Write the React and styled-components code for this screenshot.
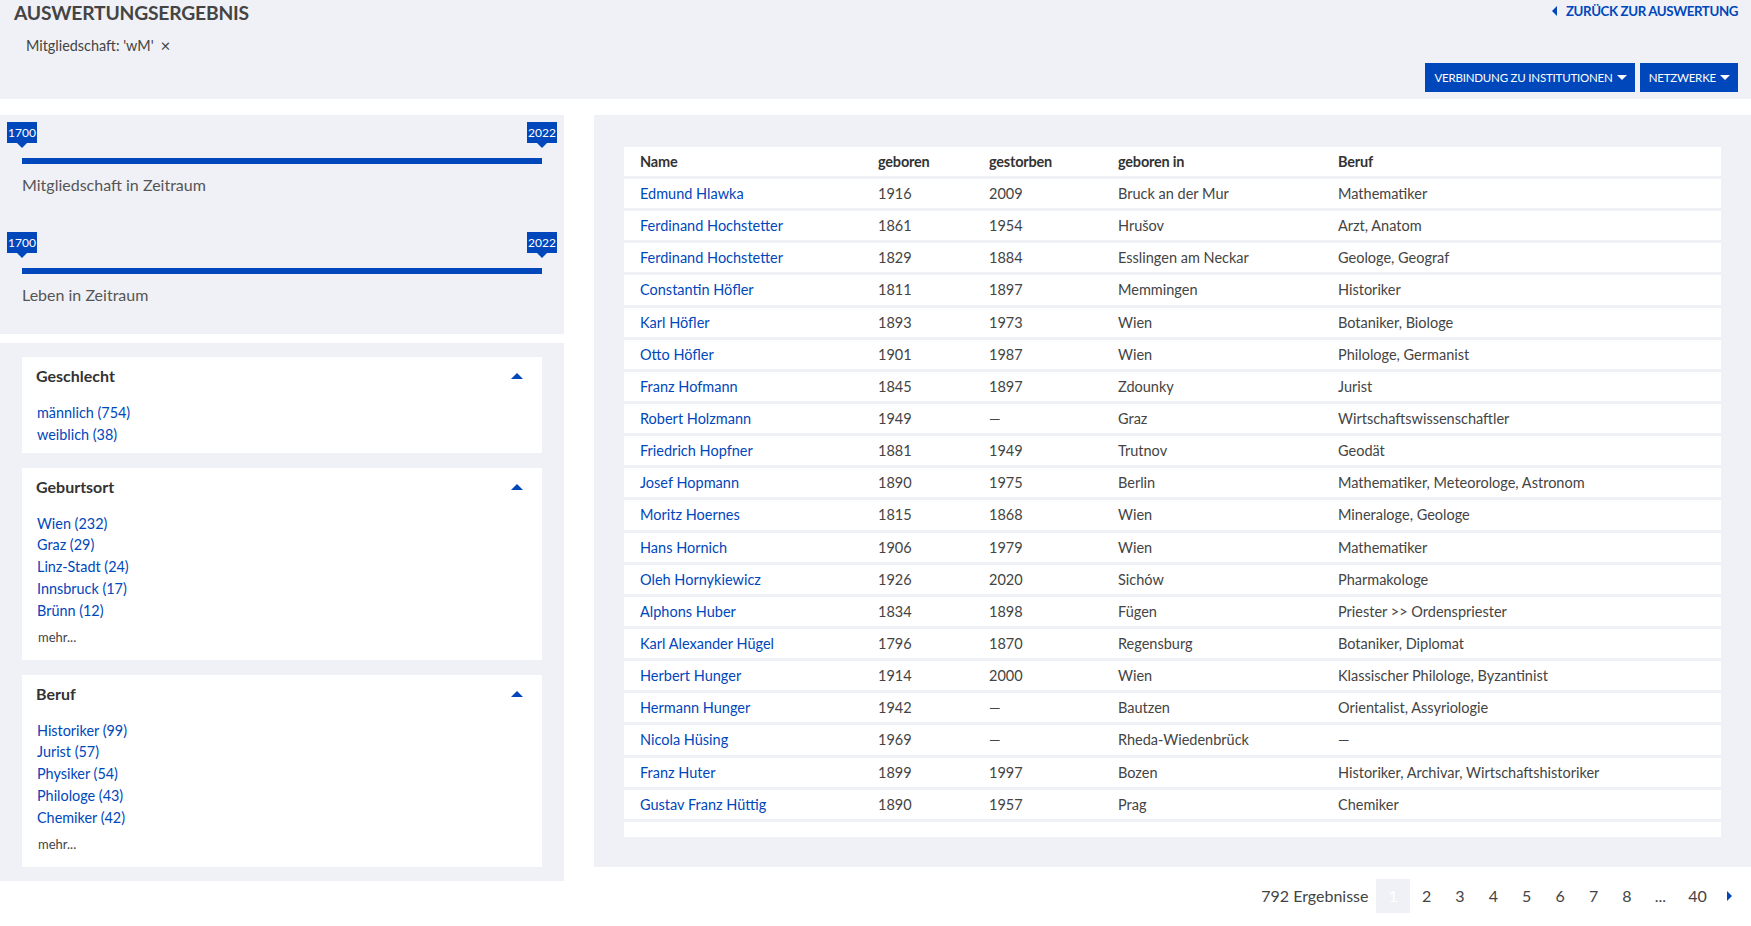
import React from 'react'
import styled, { createGlobalStyle } from 'styled-components'

const GlobalStyle = createGlobalStyle`
  body {
    margin: 0;
    font-family: Lato, "Open Sans", sans-serif;
    color: #444;
    background: #fff;
  }
  * { box-sizing: border-box; }
`

const BLUE = '#0047bb'
const GREY = '#f0f1f6'

const rows = [
  ['Edmund Hlawka', '1916', '2009', 'Bruck an der Mur', 'Mathematiker'],
  ['Ferdinand Hochstetter', '1861', '1954', 'Hrušov', 'Arzt, Anatom'],
  ['Ferdinand Hochstetter', '1829', '1884', 'Esslingen am Neckar', 'Geologe, Geograf'],
  ['Constantin Höfler', '1811', '1897', 'Memmingen', 'Historiker'],
  ['Karl Höfler', '1893', '1973', 'Wien', 'Botaniker, Biologe'],
  ['Otto Höfler', '1901', '1987', 'Wien', 'Philologe, Germanist'],
  ['Franz Hofmann', '1845', '1897', 'Zdounky', 'Jurist'],
  ['Robert Holzmann', '1949', '—', 'Graz', 'Wirtschaftswissenschaftler'],
  ['Friedrich Hopfner', '1881', '1949', 'Trutnov', 'Geodät'],
  ['Josef Hopmann', '1890', '1975', 'Berlin', 'Mathematiker, Meteorologe, Astronom'],
  ['Moritz Hoernes', '1815', '1868', 'Wien', 'Mineraloge, Geologe'],
  ['Hans Hornich', '1906', '1979', 'Wien', 'Mathematiker'],
  ['Oleh Hornykiewicz', '1926', '2020', 'Sichów', 'Pharmakologe'],
  ['Alphons Huber', '1834', '1898', 'Fügen', 'Priester >> Ordenspriester'],
  ['Karl Alexander Hügel', '1796', '1870', 'Regensburg', 'Botaniker, Diplomat'],
  ['Herbert Hunger', '1914', '2000', 'Wien', 'Klassischer Philologe, Byzantinist'],
  ['Hermann Hunger', '1942', '—', 'Bautzen', 'Orientalist, Assyriologie'],
  ['Nicola Hüsing', '1969', '—', 'Rheda-Wiedenbrück', '—'],
  ['Franz Huter', '1899', '1997', 'Bozen', 'Historiker, Archivar, Wirtschaftshistoriker'],
  ['Gustav Franz Hüttig', '1890', '1957', 'Prag', 'Chemiker'],
]

const facets = [
  { title: 'Geschlecht', items: ['männlich (754)', 'weiblich (38)'] },
  { title: 'Geburtsort', items: ['Wien (232)', 'Graz (29)', 'Linz-Stadt (24)', 'Innsbruck (17)', 'Brünn (12)'], more: true },
  { title: 'Beruf', items: ['Historiker (99)', 'Jurist (57)', 'Physiker (54)', 'Philologe (43)', 'Chemiker (42)'], more: true },
]

const Caret = ({ dir = 'down', size = 5, color = '#fff' }) => {
  const pts = {
    down: '0,0 10,0 5,5',
    up: '0,5 10,5 5,0',
    left: '5,0 5,10 0,5',
    right: '0,0 0,10 5,5',
  }[dir]
  const vert = dir === 'up' || dir === 'down'
  return (
    <svg width={vert ? size * 2 : size} height={vert ? size : size * 2} viewBox={vert ? '0 0 10 5' : '0 0 5 10'}>
      <polygon points={pts} fill={color} />
    </svg>
  )
}

const Page = styled.div`
  width: 1751px;
  min-height: 926px;
`

const Header = styled.header`
  background: ${GREY};
  padding: 0 13px 7px 14px;
  display: flex;
  flex-direction: column;
`

const TopRow = styled.div`
  display: flex;
  justify-content: space-between;
  align-items: flex-start;
`

const Title = styled.h1`
  margin: 0;
  font-size: 19.3px;
  line-height: 26px;
  font-weight: 700;
  color: #444;
  letter-spacing: -0.2px;
`

const BackLink = styled.a`
  display: flex;
  align-items: center;
  gap: 9px;
  font-size: 13.3px;
  line-height: 22px;
  font-weight: 700;
  color: ${BLUE};
  text-transform: uppercase;
  letter-spacing: -0.4px;
  text-decoration: none;
`

const Chip = styled.div`
  margin-top: 9px;
  padding-left: 12px;
  font-size: 14.4px;
  line-height: 22px;
  color: #444;
  display: flex;
  align-items: center;
  gap: 7px;
`

const Close = styled.span`
  font-size: 17px;
  color: #444;
`

const ButtonRow = styled.div`
  margin-top: 6px;
  display: flex;
  justify-content: flex-end;
  gap: 5px;
`

const DropButton = styled.button`
  height: 29px;
  padding: 0 8px 0 9px;
  border: none;
  background: ${BLUE};
  color: #fff;
  font-family: Lato, sans-serif;
  font-size: 11.5px;
  letter-spacing: -0.2px;
  text-transform: uppercase;
  display: flex;
  align-items: center;
  gap: 4px;
`

const Main = styled.main`
  margin-top: 16px;
  display: grid;
  grid-template-columns: 564px 1fr;
  column-gap: 30px;
  align-items: start;
`

const Side = styled.aside`
  display: flex;
  flex-direction: column;
  gap: 9px;
`

const SliderSection = styled.section`
  background: ${GREY};
  padding: 7px 22px 28px;
`

const SliderBlock = styled.div`
  padding-top: 36px;
  & + & { margin-top: 36px; }
`

const Track = styled.div`
  position: relative;
  height: 6px;
  background: ${BLUE};
`

const Handle = styled.div`
  position: absolute;
  bottom: 21px;
  left: ${p => (p.$end ? '100%' : '0')};
  transform: translateX(-50%);
  width: 30px;
  height: 21px;
  background: ${BLUE};
  color: #fff;
  font-size: 12px;
  line-height: 21px;
  text-align: center;
  &::after {
    content: '';
    position: absolute;
    left: 50%;
    top: 100%;
    transform: translateX(-50%);
    border-left: 5px solid transparent;
    border-right: 5px solid transparent;
    border-top: 5px solid ${BLUE};
  }
`

const SliderLabel = styled.div`
  margin-top: 10px;
  font-size: 16px;
  line-height: 22px;
  color: #555;
`

const FacetSection = styled.section`
  background: ${GREY};
  padding: 14px 22px;
  display: flex;
  flex-direction: column;
  gap: 15px;
`

const FacetBox = styled.div`
  background: #fff;
  padding: 8px 19px 7px 14px;
`

const FacetHead = styled.div`
  display: flex;
  justify-content: space-between;
  align-items: center;
  font-size: 16px;
  line-height: 22px;
  font-weight: 700;
  color: #333;
`

const FacetList = styled.ul`
  list-style: none;
  margin: 15px 0 0;
  padding: 0 0 0 1px;
`

const FacetItem = styled.li`
  font-size: 14.4px;
  line-height: 21.8px;
  color: ${BLUE};
`

const More = styled.div`
  margin: 6px 0 7px 2px;
  font-size: 13px;
  line-height: 18px;
  color: #444;
`

const Content = styled.div`
  display: flex;
  flex-direction: column;
`

const TablePanel = styled.section`
  background: ${GREY};
  padding: 29px 30px 27px 30px;
`

const Table = styled.table`
  width: 100%;
  border-collapse: separate;
  border-spacing: 0 3px;
  table-layout: fixed;
`

const Th = styled.th`
  background: #fff;
  text-align: left;
  font-weight: 700;
  font-size: 14.5px;
  color: #333;
  height: 29px;
  padding: 0 16px;
  letter-spacing: -0.2px;
`

const Td = styled.td`
  background: #fff;
  height: 29.15px;
  padding: 0 16px;
  font-size: 14.5px;
  color: ${p => (p.$link ? BLUE : '#444')};
  white-space: nowrap;
  overflow: hidden;
`

const FootCell = styled.td`
  background: #fff;
  height: 15px;
  padding: 0;
`

const Pagination = styled.nav`
  display: flex;
  justify-content: flex-end;
  align-items: center;
  padding: 12px 19px 0 0;
  font-size: 16px;
  color: #444;
`

const Count = styled.span`
  margin-right: 8px;
`

const PageItem = styled.span`
  min-width: ${p => (p.$wide ? '41px' : '33.4px')};
  height: 34px;
  display: flex;
  align-items: center;
  justify-content: center;
  background: ${p => (p.$active ? GREY : 'transparent')};
  color: ${p => (p.$active ? '#fff' : '#444')};
`

const NextCaret = styled.span`
  margin-left: 9px;
  display: flex;
  align-items: center;
`

export default function App() {
  return (
    <Page>
      <GlobalStyle />
      <Header>
        <TopRow>
          <Title>AUSWERTUNGSERGEBNIS</Title>
          <BackLink href="#">
            <Caret dir="left" size={5} color={BLUE} />
            Zurück zur Auswertung
          </BackLink>
        </TopRow>
        <Chip>
          Mitgliedschaft: 'wM' <Close>×</Close>
        </Chip>
        <ButtonRow>
          <DropButton>Verbindung zu Institutionen <Caret /></DropButton>
          <DropButton>Netzwerke <Caret /></DropButton>
        </ButtonRow>
      </Header>

      <Main>
        <Side>
          <SliderSection>
            {['Mitgliedschaft in Zeitraum', 'Leben in Zeitraum'].map(label => (
              <SliderBlock key={label}>
                <Track>
                  <Handle>1700</Handle>
                  <Handle $end>2022</Handle>
                </Track>
                <SliderLabel>{label}</SliderLabel>
              </SliderBlock>
            ))}
          </SliderSection>

          <FacetSection>
            {facets.map(f => (
              <FacetBox key={f.title}>
                <FacetHead>
                  {f.title}
                  <Caret dir="up" size={6} color={BLUE} />
                </FacetHead>
                <FacetList>
                  {f.items.map(i => <FacetItem key={i}>{i}</FacetItem>)}
                </FacetList>
                {f.more && <More>mehr...</More>}
              </FacetBox>
            ))}
          </FacetSection>
        </Side>

        <Content>
          <TablePanel>
            <Table>
              <colgroup>
                <col style={{ width: 238 }} />
                <col style={{ width: 111 }} />
                <col style={{ width: 129 }} />
                <col style={{ width: 220 }} />
                <col />
              </colgroup>
              <thead>
                <tr>
                  <Th>Name</Th>
                  <Th>geboren</Th>
                  <Th>gestorben</Th>
                  <Th>geboren in</Th>
                  <Th>Beruf</Th>
                </tr>
              </thead>
              <tbody>
                {rows.map((r, idx) => (
                  <tr key={idx}>
                    <Td $link>{r[0]}</Td>
                    <Td>{r[1]}</Td>
                    <Td>{r[2]}</Td>
                    <Td>{r[3]}</Td>
                    <Td>{r[4]}</Td>
                  </tr>
                ))}
                <tr><FootCell colSpan={5} /></tr>
              </tbody>
            </Table>
          </TablePanel>
          <Pagination>
            <Count>792 Ergebnisse</Count>
            <PageItem $active>1</PageItem>
            {['2', '3', '4', '5', '6', '7', '8', '...'].map(n => (
              <PageItem key={n}>{n}</PageItem>
            ))}
            <PageItem $wide>40</PageItem>
            <NextCaret><Caret dir="right" size={5} color={BLUE} /></NextCaret>
          </Pagination>
        </Content>
      </Main>
    </Page>
  )
}
